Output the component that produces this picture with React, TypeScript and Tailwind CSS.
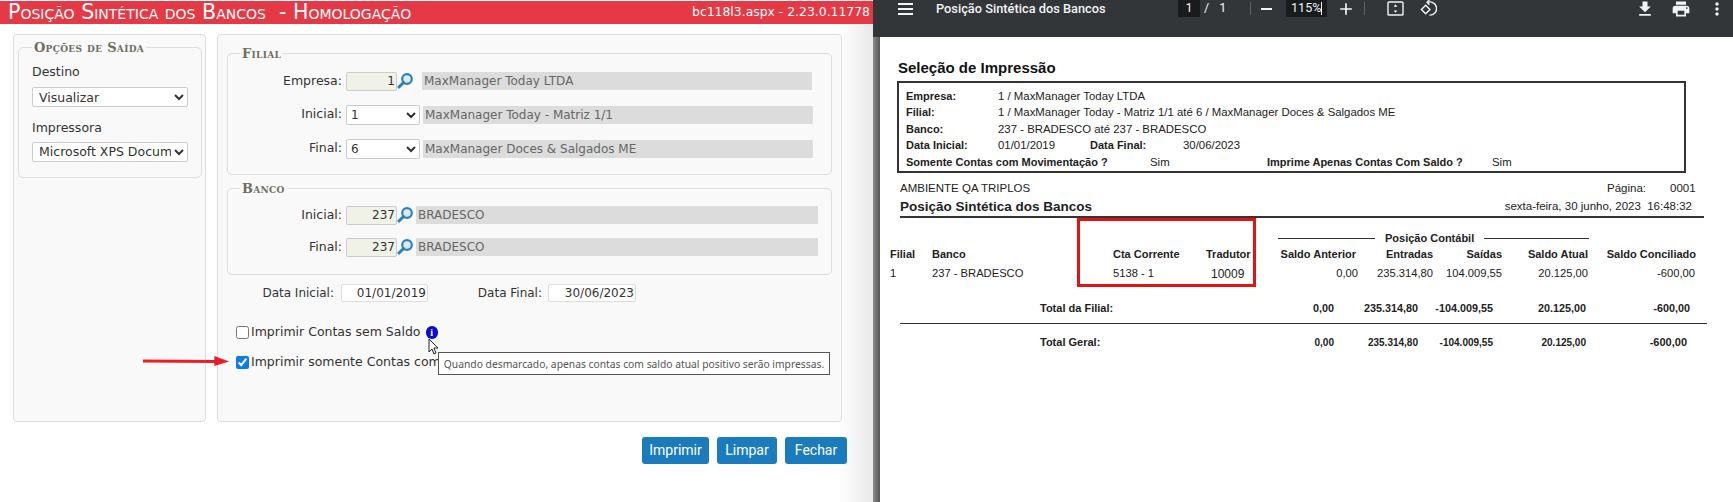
const dejavu = "font-['DejaVu_Sans',sans-serif]";

function Label({ children, width }: { children: React.ReactNode; width: string }) {
  return <span className={`${width} shrink-0 text-right text-[12.5px] text-[#333]`}>{children}</span>;
}

function Lookup() {
  return (
    <svg viewBox="0 0 16 16" className="h-[18px] w-[16px] shrink-0">
      <circle cx="10" cy="6" r="4.8" fill="#dcecf6" stroke="#2a80bd" strokeWidth="2.2" />
      <path d="M6.5 9.5 2 14" stroke="#2a80bd" strokeWidth="3" strokeLinecap="round" />
    </svg>
  );
}

function CodeInput({ value }: { value: string }) {
  return (
    <input
      readOnly
      value={value}
      className="h-[19px] w-[51px] shrink-0 rounded-[2px] border border-[#ccc] bg-[#f0f2e8] pr-[1px] text-right text-[12px] text-[#333] outline-none"
    />
  );
}

function Desc({ text, width, ml }: { text: string; width: string; ml: string }) {
  return (
    <div className={`${width} ${ml} flex h-[18px] shrink-0 items-center rounded-[1px] bg-[#dcdcdc] pl-[2px] text-[12px] text-[#666]`}>
      {text}
    </div>
  );
}

function SmallSelect({ value }: { value: string }) {
  return (
    <select
      defaultValue={value}
      className="ml-[4px] h-[20px] w-[74px] shrink-0 rounded-[2px] border border-[#ccc] bg-white text-[12px] text-[#333] outline-none"
    >
      <option>{value}</option>
    </select>
  );
}

function Legend({ children, ml }: { children: React.ReactNode; ml: string }) {
  return (
    <legend className={`${ml} px-[2px] font-['DejaVu_Serif',serif] text-[13px] font-bold tracking-[0.3px] text-[#6e6e5e] [font-variant:small-caps]`}>
      {children}
    </legend>
  );
}

function Options() {
  return (
    <div className="h-[388px] w-[193px] shrink-0 rounded-[4px] border border-[#ddd] bg-[#f9f9f9] px-[4px] pt-[3px]">
      <fieldset className="h-[140px] rounded-[5px] border border-[#ddd] px-[13px]">
        <Legend ml="ml-0">Opções de Saída</Legend>
        <div className="mt-[5px] text-[12.5px] text-[#333]">Destino</div>
        <select
          defaultValue="Visualizar"
          className="mt-[6px] h-[20px] w-[156px] rounded-[2px] border border-[#ccc] bg-white pl-[2px] text-[12.5px] text-[#333] outline-none"
        >
          <option>Visualizar</option>
        </select>
        <div className="mt-[10px] text-[12.5px] text-[#333]">Impressora</div>
        <select
          defaultValue="Microsoft XPS Document Writer"
          className="mt-[4px] h-[20px] w-[156px] rounded-[2px] border border-[#ccc] bg-white pl-[2px] text-[12.5px] text-[#333] outline-none"
        >
          <option>Microsoft XPS Document Writer</option>
        </select>
      </fieldset>
    </div>
  );
}

function Filters() {
  return (
    <div className="h-[388px] w-[625px] shrink-0 rounded-[4px] border border-[#ddd] bg-[#f9f9f9] px-[9px] pt-[9px]">
      <fieldset className="h-[131px] rounded-[5px] border border-[#ddd]">
        <Legend ml="ml-[12px]">Filial</Legend>
        <div className="mt-[8px] flex items-center">
          <Label width="w-[114px]">Empresa:</Label>
          <div className="ml-[4px] flex items-center">
            <CodeInput value="1" />
            <Lookup />
          </div>
          <Desc text="MaxManager Today LTDA" width="w-[390px]" ml="ml-[9px]" />
        </div>
        <div className="mt-[14px] flex items-center">
          <Label width="w-[114px]">Inicial:</Label>
          <SmallSelect value="1" />
          <Desc text="MaxManager Today - Matriz 1/1" width="w-[390px]" ml="ml-[3px]" />
        </div>
        <div className="mt-[14px] flex items-center">
          <Label width="w-[114px]">Final:</Label>
          <SmallSelect value="6" />
          <Desc text="MaxManager Doces & Salgados ME" width="w-[390px]" ml="ml-[3px]" />
        </div>
      </fieldset>
      <fieldset className="mt-[4px] h-[96px] rounded-[5px] border border-[#ddd]">
        <Legend ml="ml-[12px]">Banco</Legend>
        <div className="mt-[7px] flex items-center">
          <Label width="w-[114px]">Inicial:</Label>
          <div className="ml-[4px] flex items-center">
            <CodeInput value="237" />
            <Lookup />
          </div>
          <Desc text="BRADESCO" width="w-[402px]" ml="ml-[3px]" />
        </div>
        <div className="mt-[13px] flex items-center">
          <Label width="w-[114px]">Final:</Label>
          <div className="ml-[4px] flex items-center">
            <CodeInput value="237" />
            <Lookup />
          </div>
          <Desc text="BRADESCO" width="w-[402px]" ml="ml-[3px]" />
        </div>
      </fieldset>
      <div className="mt-[9px] flex items-center">
        <span className="w-[107px] shrink-0 text-right text-[12px] text-[#333]">Data Inicial:</span>
        <input
          readOnly
          value="01/01/2019"
          className="ml-[7px] h-[18px] w-[87px] rounded-[2px] border border-[#ddd] bg-white pr-[1px] text-right text-[12px] text-[#333] outline-none"
        />
        <span className="w-[114px] shrink-0 text-right text-[12px] text-[#333]">Data Final:</span>
        <input
          readOnly
          value="30/06/2023"
          className="ml-[6px] h-[18px] w-[88px] rounded-[2px] border border-[#ddd] bg-white pr-[1px] text-right text-[12px] text-[#333] outline-none"
        />
      </div>
      <div className="ml-[9px] mt-[21px] flex items-center text-[12.5px] text-[#333]">
        <input type="checkbox" readOnly className="h-[13px] w-[13px]" />
        <span className="ml-[2px]">Imprimir Contas sem Saldo</span>
        <span className="ml-[5px] flex h-[13px] w-[12px] items-center justify-center rounded-full bg-[#0a0ad0] font-['Liberation_Serif',serif] text-[10px] font-bold text-white">
          i
        </span>
      </div>
      <div className="ml-[9px] mt-[11px] flex items-center text-[12.5px] text-[#333]">
        <input type="checkbox" checked readOnly className="h-[13px] w-[13px] accent-[#0b7cf0]" />
        <span className="ml-[2px]">Imprimir somente Contas com</span>
      </div>
    </div>
  );
}

function ToolIcon({ d, className }: { d: string; className: string }) {
  return (
    <svg viewBox="0 0 24 24" className={className} fill="#f1f3f4">
      <path d={d} />
    </svg>
  );
}

function Toolbar() {
  return (
    <div className="flex h-[37px] shrink-0 items-start bg-[#323639] text-[#f1f3f4]">
      <div className="flex h-[17px] w-[305px] shrink-0 items-center">
        <div className="ml-[25px] flex w-[15px] flex-col gap-[3px]">
          <span className="h-[2px] bg-[#f1f3f4]" />
          <span className="h-[2px] bg-[#f1f3f4]" />
          <span className="h-[2px] bg-[#f1f3f4]" />
        </div>
        <span className="ml-[23px] font-['Roboto',sans-serif] text-[12.8px] font-medium">Posição Sintética dos Bancos</span>
      </div>
      <div className="flex h-[17px] items-center font-['Roboto',sans-serif] text-[12.5px]">
        <span className="flex h-[17px] w-[22px] items-center justify-center bg-[#191b1c]">1</span>
        <span className="ml-[4px]">/</span>
        <span className="ml-[10px]">1</span>
        <span className="ml-[24px] h-[13px] w-px bg-[#5f6368]" />
        <span className="ml-[10px] h-[2px] w-[11px] bg-[#f1f3f4]" />
        <span className="ml-[14px] flex h-[17px] w-[41px] items-center justify-center bg-[#191b1c]">
          115%<span className="h-[13px] w-px bg-white" />
        </span>
        <ToolIcon d="M19 13h-6v6h-2v-6H5v-2h6V5h2v6h6z" className="ml-[9px] h-[20px] w-[20px] shrink-0" />
        <span className="ml-[8px] h-[13px] w-px bg-[#5f6368]" />
        <svg viewBox="0 0 18 16" className="ml-[22px] h-[15px] w-[17px] shrink-0" fill="none" stroke="#f1f3f4" strokeWidth="1.5">
          <rect x="1" y="1" width="16" height="14" rx="1" />
          <path d="M9 3.5 11 6H7zM9 12.5 7 10h4z" fill="#f1f3f4" stroke="none" />
        </svg>
        <svg viewBox="0 0 18 18" className="ml-[16px] h-[17px] w-[17px] shrink-0" fill="none" stroke="#f1f3f4" strokeWidth="1.5">
          <path d="M8 2.5A7 7 0 1 1 10 16" />
          <path d="M10 0 7.5 2.5 10 5" />
          <path d="M6 5.5 1.5 10 6 14.5 10.5 10z" />
        </svg>
      </div>
      <div className="ml-auto flex h-[17px] items-center">
        <ToolIcon d="M19 9h-4V3H9v6H5l7 7 7-7zM5 18v2h14v-2H5z" className="h-[20px] w-[20px]" />
        <ToolIcon
          d="M19 8H5c-1.66 0-3 1.34-3 3v6h4v4h12v-4h4v-6c0-1.66-1.34-3-3-3zm-3 11H8v-5h8v5zm3-7c-.55 0-1-.45-1-1s.45-1 1-1 1 .45 1 1-.45 1-1 1zm-1-9H6v4h12V3z"
          className="ml-[16px] h-[20px] w-[20px]"
        />
        <ToolIcon
          d="M12 8c1.1 0 2-.9 2-2s-.9-2-2-2-2 .9-2 2 .9 2 2 2zm0 2c-1.1 0-2 .9-2 2s.9 2 2 2 2-.9 2-2-.9-2-2-2zm0 6c-1.1 0-2 .9-2 2s.9 2 2 2 2-.9 2-2-.9-2-2-2z"
          className="ml-[16px] mr-[6px] h-[20px] w-[20px]"
        />
      </div>
    </div>
  );
}

function SelectionBox() {
  const labelClass = "w-[92px] shrink-0 text-[11px] font-bold";
  return (
    <div className="ml-[17px] mt-[4px] h-[92px] w-[789px] border-2 border-[#333] pl-[7px] pt-[5px] text-[11.4px] leading-[16.4px] text-[#222]">
      <div className="flex"><span className={labelClass}>Empresa:</span><span>1 / MaxManager Today LTDA</span></div>
      <div className="flex"><span className={labelClass}>Filial:</span><span>1 / MaxManager Today - Matriz 1/1 até 6 / MaxManager Doces & Salgados ME</span></div>
      <div className="flex"><span className={labelClass}>Banco:</span><span>237 - BRADESCO até 237 - BRADESCO</span></div>
      <div className="flex">
        <span className={labelClass}>Data Inicial:</span>
        <span className="w-[92px]">01/01/2019</span>
        <span className="w-[93px] text-[11px] font-bold">Data Final:</span>
        <span>30/06/2023</span>
      </div>
      <div className="flex">
        <span className="w-[244px] shrink-0 text-[11px] font-bold">Somente Contas com Movimentação ?</span>
        <span className="w-[117px] shrink-0">Sim</span>
        <span className="w-[225px] shrink-0 text-[11px] font-bold">Imprime Apenas Contas Com Saldo ?</span>
        <span>Sim</span>
      </div>
    </div>
  );
}

function Report() {
  return (
    <div className="relative min-w-0 flex-1 bg-white font-['Liberation_Sans',sans-serif] text-[#222]">
      <div className="ml-[18px] mt-[22px] text-[15px] font-bold leading-[18px] text-[#111]">Seleção de Impressão</div>
      <SelectionBox />
      <div className="ml-[20px] mt-[8px] flex h-[16px] items-center text-[11.5px]">
        <span className="w-[707px]">AMBIENTE QA TRIPLOS</span>
        <span className="w-[63px]">Página:</span>
        <span>0001</span>
      </div>
      <div className="ml-[20px] mt-[1px] flex h-[18px] w-[804px] items-center justify-between text-[11.5px]">
        <span className="text-[13.5px] font-bold">Posição Sintética dos Bancos</span>
        <span className="mr-[12px]">
          sexta-feira, 30 junho, 2023&nbsp;&nbsp;16:48:32
        </span>
      </div>
      <div className="ml-[20px] h-[1.5px] w-[804px] bg-[#333]" />

      <div className="ml-[398px] mt-[15px] flex h-[12px] items-center text-[11px] font-bold whitespace-nowrap">
        <span className="h-[1.5px] w-[97px] bg-[#333]" />
        <span className="ml-[10px] w-[89px]">Posição Contábil</span>
        <span className="ml-[10px] h-[1.5px] w-[105px] bg-[#333]" />
      </div>

      <div className="mt-[2px] flex h-[16px] items-center text-[11px] font-bold whitespace-nowrap">
        <span className="ml-[10px] w-[42px]">Filial</span>
        <span className="w-[181px]">Banco</span>
        <span className="w-[93px]">Cta Corrente</span>
        <span className="w-[60px]">Tradutor</span>
        <span className="w-[90px] text-right">Saldo Anterior</span>
        <span className="w-[77px] text-right">Entradas</span>
        <span className="w-[69px] text-right">Saídas</span>
        <span className="w-[86px] text-right">Saldo Atual</span>
        <span className="w-[108px] text-right">Saldo Conciliado</span>
      </div>
      <div className="mt-[3px] flex h-[16px] items-center text-[11.2px] whitespace-nowrap">
        <span className="ml-[10px] w-[42px]">1</span>
        <span className="w-[181px]">237 - BRADESCO</span>
        <span className="w-[93px]">5138 - 1</span>
        <span className="w-[60px] pl-[5px] text-[12px]">10009</span>
        <span className="w-[92px] text-right">0,00</span>
        <span className="w-[75px] text-right">235.314,80</span>
        <span className="w-[69px] text-right">104.009,55</span>
        <span className="w-[86px] text-right">20.125,00</span>
        <span className="w-[107px] text-right">-600,00</span>
      </div>

      <div className="mt-[19px] flex h-[16px] items-center text-[10.8px] font-bold whitespace-nowrap">
        <span className="ml-[160px] w-[200px] text-[11px]">Total da Filial:</span>
        <span className="w-[94px] text-right">0,00</span>
        <span className="w-[84px] text-right">235.314,80</span>
        <span className="w-[75px] text-right">-104.009,55</span>
        <span className="w-[93px] text-right">20.125,00</span>
        <span className="w-[104px] text-right">-600,00</span>
      </div>
      <div className="ml-[20px] mt-[6px] h-[1.5px] w-[807px] bg-[#333]" />
      <div className="mt-[10px] flex h-[16px] items-center text-[10px] font-bold whitespace-nowrap">
        <span className="ml-[160px] w-[200px] text-[11px]">Total Geral:</span>
        <span className="w-[94px] text-right">0,00</span>
        <span className="w-[84px] text-right">235.314,80</span>
        <span className="w-[75px] text-right">-104.009,55</span>
        <span className="w-[93px] text-right">20.125,00</span>
        <span className="w-[101px] text-right text-[11px]">-600,00</span>
      </div>

      <div className="absolute left-[197px] top-[181px] h-[69px] w-[179px] border-[3px] border-[#e41212]" />
    </div>
  );
}

export default function App() {
  return (
    <div className={`relative flex h-[502px] w-[1733px] overflow-hidden bg-white ${dejavu}`}>
      <div className="relative w-[873px] shrink-0 bg-[linear-gradient(to_right,#fff_96%,#e8e8e8)] pt-[1px]">
        <div className="flex h-[23px] items-center justify-between bg-[#e63946] pl-[8px] pr-[3px] text-white">
          <span className="text-[20.6px] leading-none [font-variant:small-caps]">Posição Sintética dos Bancos&nbsp;&nbsp;- Homologação</span>
          <span className="text-[12.4px]">bc118l3.aspx - 2.23.0.11778</span>
        </div>
        <div className="ml-[13px] mt-[10px] flex gap-[11px]">
          <Options />
          <Filters />
        </div>
        <div className="mr-[26px] mt-[15px] flex justify-end gap-[8px] font-['Roboto',sans-serif] text-[14px] text-white">
          <button className="h-[27px] w-[67px] rounded-[3px] bg-[#1a7cbd]">Imprimir</button>
          <button className="h-[27px] w-[60px] rounded-[3px] bg-[#1a7cbd]">Limpar</button>
          <button className="h-[27px] w-[62px] rounded-[3px] bg-[#1a7cbd]">Fechar</button>
        </div>
        <div className="absolute left-[438px] top-[352px] flex h-[23px] w-[392px] items-center justify-center border border-[#555] bg-white pt-[2px] font-['Noto_Sans',sans-serif] text-[10.3px] text-[#555]">
          Quando desmarcado, apenas contas com saldo atual positivo serão impressas.
        </div>
        <svg viewBox="0 0 90 10" className="absolute left-[142px] top-[355px] h-[12px] w-[88px]">
          <path d="M1 3.5 74 4 74 0 89 5.5 74 10 74 7 1 6.5z" fill="#ee1c25" />
        </svg>
        <svg viewBox="0 0 12 18" className="absolute left-[428px] top-[338px] h-[18px] w-[12px]">
          <path d="M1 1v13l3-3 2 5 2-1-2-5h4z" fill="#fff" stroke="#222" strokeWidth="1" />
        </svg>
      </div>
      <div className="flex min-w-0 flex-1 flex-col">
        <Toolbar />
        <div className="flex min-h-0 flex-1">
          <div className="w-[7px] shrink-0 bg-[linear-gradient(to_right,#8a8a8a,#555)]" />
          <Report />
        </div>
      </div>
    </div>
  );
}
